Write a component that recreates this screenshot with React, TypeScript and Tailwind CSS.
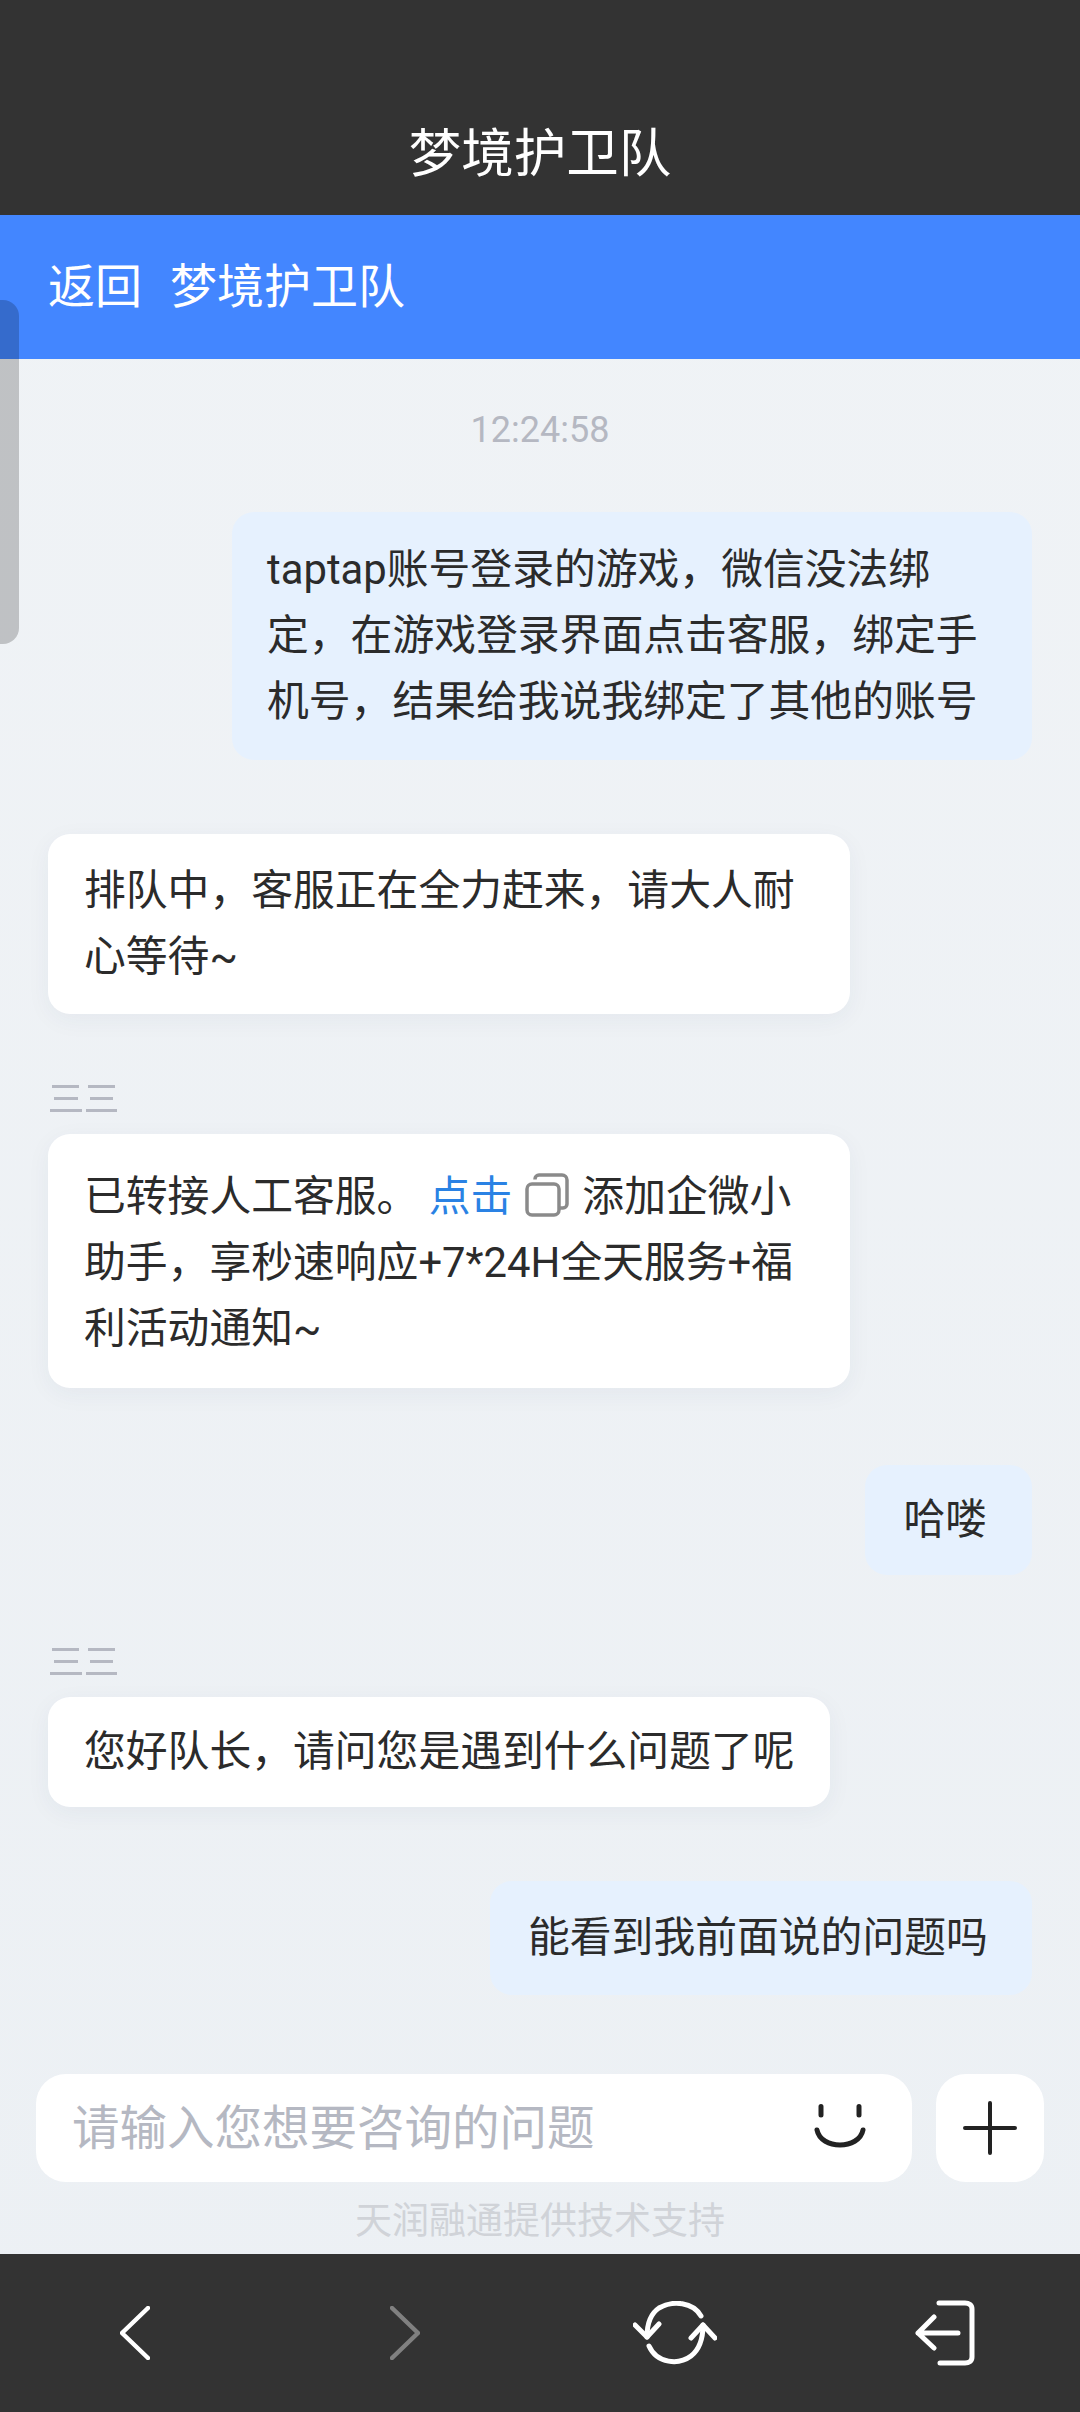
const font = "font-['Roboto','Noto_Sans_CJK_SC',sans-serif]";

function Agent() {
  return (
    <svg width="68" height="30" viewBox="0 0 68 30" className="block" fill="none" stroke="#b5b8c2" strokeWidth="3">
      <path d="M2 2.500H29M38 2.500H65M4 14.500H28M40 14.500H63M0 26.500H32M36 26.500H67" />
    </svg>
  );
}

function CopyIcon() {
  return (
    <svg width="44" height="44" viewBox="0 0 44 44" className="mx-[13px] inline-block align-[-6px]" fill="none" stroke="#8a8a8a" strokeWidth="3.500">
      <rect x="2" y="11" width="32" height="31" rx="5" />
      <path d="M10 6.500V6a4 4 0 0 1 4-4h23a5 5 0 0 1 5 5v24a4 4 0 0 1-4 4h-4" />
    </svg>
  );
}

export default function App() {
  return (
    <div className={`${font} flex h-[2412px] w-[1080px] flex-col overflow-hidden bg-gradient-to-b from-[#f0f3f6] to-[#ecf0f4] text-[41.800px] leading-[66px] text-[#2b2b2b]`}>
      <div className="flex h-[215px] shrink-0 items-end justify-center bg-[#333333] pb-[29px] text-[52.500px] leading-[64px] text-white">
        梦境护卫队
      </div>
      <div className="flex h-[144px] shrink-0 items-center gap-[28px] bg-[#4386ff] pl-[48px] text-[47px] text-white">
        <span>返回</span>
        <span>梦境护卫队</span>
      </div>

      <div className="absolute left-0 top-[300px] h-[344px] w-[19px] rounded-r-[16px] bg-black/20" />

      <div className="flex flex-1 flex-col px-[48px]">
        <div className="mt-[46px] h-[50px] text-center text-[36px] leading-[50px] text-[#b5b8c2]">12:24:58</div>

        <div className="mt-[57px] w-[800px] self-end whitespace-nowrap rounded-[22px] bg-[#e6f1fe] px-[35px] py-[25px]">
          taptap账号登录的游戏，微信没法绑
          <br />
          定，在游戏登录界面点击客服，绑定手
          <br />
          机号，结果给我说我绑定了其他的账号
        </div>

        <div className="mt-[74px] w-[802px] whitespace-nowrap rounded-[22px] bg-white px-[36px] py-[24px] shadow-[0_6px_24px_rgba(40,60,90,0.05)]">
          排队中，客服正在全力赶来，请大人耐
          <br />
          心等待~
        </div>

        <div className="mt-[70px] ml-[2px]">
          <Agent />
        </div>
        <div className="mt-[20px] w-[802px] whitespace-nowrap rounded-[22px] bg-white px-[36px] pb-[26px] pt-[30px] shadow-[0_6px_24px_rgba(40,60,90,0.05)]">
          已转接人工客服。 <span className="text-[#2a82e4]">点击</span>
          <CopyIcon />
          添加企微小
          <br />
          助手，享秒速响应+7*24H全天服务+福
          <br />
          利活动通知~
        </div>

        <div className="mt-[77px] self-end whitespace-nowrap rounded-[22px] bg-[#e6f1fe] pl-[38px] pr-[45px] py-[22px]">哈喽</div>

        <div className="mt-[72px] ml-[2px]">
          <Agent />
        </div>
        <div className="mt-[20px] w-[782px] whitespace-nowrap rounded-[22px] bg-white px-[36px] py-[22px] shadow-[0_6px_24px_rgba(40,60,90,0.05)]">
          您好队长，请问您是遇到什么问题了呢
        </div>

        <div className="mt-[74px] w-[542px] self-end whitespace-nowrap rounded-[22px] bg-[#e6f1fe] px-[38px] py-[24px]">
          能看到我前面说的问题吗
        </div>
      </div>

      <div className="flex shrink-0 gap-[24px] pl-[36px] pr-[36px]">
        <div className="flex h-[108px] w-[876px] items-center justify-between rounded-[30px] bg-white pl-[36px] pr-[44px] text-[47.500px] text-[#b5b8c2]">
          <span className="pt-[2px]">请输入您想要咨询的问题</span>
          <svg width="56" height="48" viewBox="0 0 56 48" fill="none" stroke="#222222" strokeWidth="5" strokeLinecap="round">
            <path d="M9 2.500V11M47 2.500V11" />
            <path d="M5 26C9 46 47 46 51 26" />
          </svg>
        </div>
        <div className="flex h-[108px] w-[108px] items-center justify-center rounded-[30px] bg-white">
          <svg width="54" height="54" viewBox="0 0 54 54" fill="none" stroke="#222222" strokeWidth="4" strokeLinecap="round">
            <path d="M27 2V52M2 27H52" />
          </svg>
        </div>
      </div>
      <div className="h-[72px] shrink-0 pt-[14px] text-center text-[37px] leading-[52px] text-[#d0d3d8]">天润融通提供技术支持</div>

      <div className="grid h-[158px] shrink-0 grid-cols-4 items-center justify-items-center bg-[#333333]">
        <svg width="30" height="54" viewBox="0 0 30 54" fill="none" stroke="#ffffff" strokeWidth="4.500" strokeLinecap="round" strokeLinejoin="round">
          <path d="M28 2L2 27L28 52" />
        </svg>
        <svg width="30" height="54" viewBox="0 0 30 54" fill="none" stroke="#808080" strokeWidth="4.500" strokeLinecap="round" strokeLinejoin="round">
          <path d="M2 2L28 27L2 52" />
        </svg>
        <svg width="84" height="64" viewBox="0 0 84 64" fill="none" stroke="#ffffff" strokeWidth="5" strokeLinecap="round" strokeLinejoin="round">
          <path d="M68 15C60 1 40 -1 26 7C17 13 14 24 14 36" />
          <path d="M2 24L14 36L26 23" />
          <path d="M16 45C24 63 46 64 58 55C67 48 70 36 70 24" />
          <path d="M58 37L70 24L82 37" />
        </svg>
        <svg width="60" height="66" viewBox="0 0 60 66" fill="none" stroke="#ffffff" strokeWidth="5" strokeLinecap="round" strokeLinejoin="round">
          <path d="M24 3H50C54 3 57 5 57 9V57C57 61 54 63 50 63H25" />
          <path d="M43 33H3M19 17L3 33L19 48" />
        </svg>
      </div>
    </div>
  );
}
